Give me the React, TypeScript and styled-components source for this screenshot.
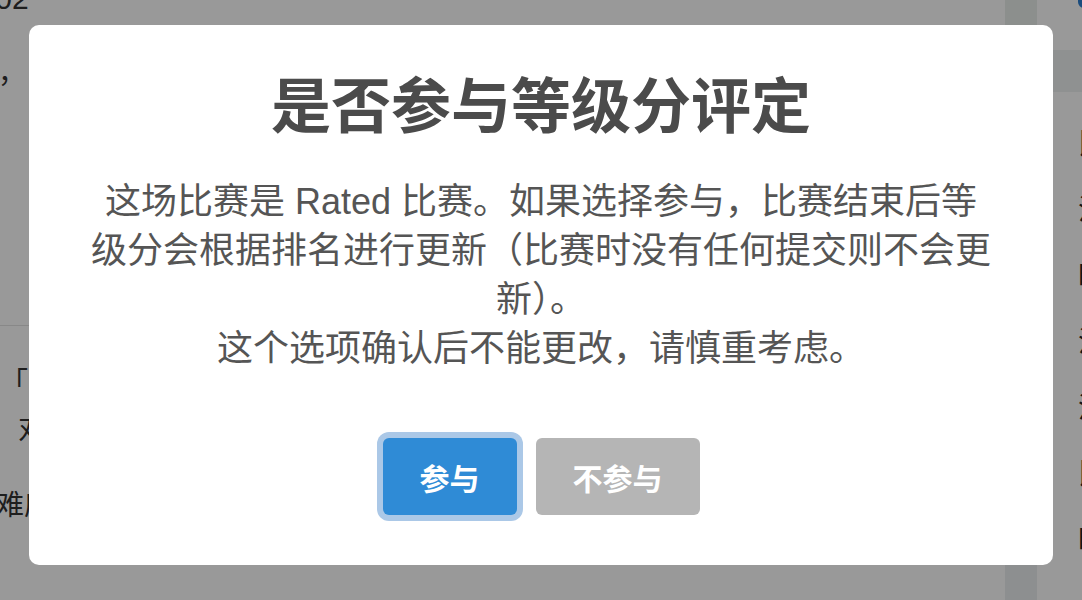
import React from "react";
import styled, { createGlobalStyle } from "styled-components";

const GlobalStyle = createGlobalStyle`
  html, body {
    margin: 0;
    padding: 0;
    width: 1082px;
    height: 600px;
    overflow: hidden;
    background: #ffffff;
  }
  body {
    font-family: "Liberation Sans", "Noto Sans CJK SC", sans-serif;
  }
`;

const Page = styled.div`
  display: flex;
  width: 1082px;
  height: 600px;
  overflow: hidden;
  background: #ffffff;
  color: #333333;
`;

const Main = styled.div`
  flex: 1;
  display: flex;
  flex-direction: column;
  overflow: hidden;
`;

const Fragment = styled.div<{ $top: number; $left: number; $size?: number }>`
  margin-top: ${(p) => p.$top}px;
  margin-left: ${(p) => p.$left}px;
  font-size: ${(p) => p.$size ?? 28}px;
  line-height: 40px;
  white-space: nowrap;
  color: #333333;
`;

const Divider = styled.div<{ $top: number }>`
  margin-top: ${(p) => p.$top}px;
  height: 1px;
  background: #e3e3e3;
`;

const Sidebar = styled.div`
  width: 32px;
  display: flex;
  flex-direction: column;
  background: #eceef1;
`;

const SidebarThumb = styled.div`
  height: 25px;
  background: #e9eeeb;
`;

const RightPanel = styled.div`
  width: 45px;
  display: flex;
  flex-direction: column;
  overflow: hidden;
  background: #ffffff;
`;

const TopBar = styled.div`
  height: 50px;
  display: flex;
  justify-content: flex-end;
`;

const BlueDot = styled.div`
  width: 6px;
  height: 8px;
  margin-right: -2px;
  border-radius: 0 0 0 6px;
  background: #2d7fd1;
`;

const Banner = styled.div`
  height: 42px;
  background: #eef2f2;
`;

const SideText = styled.div`
  display: flex;
  flex-direction: column;
  padding-left: 41px;
  padding-top: 20px;
  font-size: 28px;
  line-height: 66px;
  white-space: nowrap;
  color: #222222;
`;

const Overlay = styled.div`
  position: fixed;
  inset: 0;
  background: rgba(0, 0, 0, 0.4);
  display: flex;
  justify-content: center;
  align-items: flex-start;
  padding-top: 25px;
`;

const Modal = styled.div`
  width: 1024px;
  box-sizing: border-box;
  background: #ffffff;
  border-radius: 10px;
  padding: 47px 0 50px;
  display: flex;
  flex-direction: column;
  align-items: center;
  text-align: center;
`;

const Title = styled.h2`
  margin: 0;
  font-size: 60px;
  line-height: 72px;
  font-weight: 700;
  color: #4b4b4b;
`;

const Text = styled.div`
  margin-top: 33px;
  width: 904px;
  font-size: 36px;
  line-height: 49px;
  color: #555555;
`;

const Actions = styled.div`
  margin-top: 65px;
  display: flex;
  gap: 19px;
`;

const Button = styled.button<{ $variant: "confirm" | "cancel" }>`
  height: 77px;
  padding: 0 37px;
  border: none;
  border-radius: 6px;
  font-family: "Liberation Sans", "Noto Sans CJK SC", sans-serif;
  font-size: 30px;
  font-weight: 700;
  color: #ffffff;
  cursor: pointer;
  background: ${(p) => (p.$variant === "confirm" ? "#2f8bd6" : "#b5b5b5")};
  box-shadow: ${(p) =>
    p.$variant === "confirm" ? "0 0 0 6px #abc8e7" : "none"};
`;

export default function App() {
  return (
    <>
      <GlobalStyle />
      <Page>
        <Main>
          <Fragment $top={-21} $left={-38} $size={30}>2002</Fragment>
          <Fragment $top={35} $left={-2}>，</Fragment>
          <Divider $top={231} />
          <Fragment $top={38} $left={0}>「问题</Fragment>
          <Fragment $top={6} $left={18}>对</Fragment>
          <Fragment $top={36} $left={-4}>难度</Fragment>
        </Main>
        <Sidebar>
          <SidebarThumb />
        </Sidebar>
        <RightPanel>
          <TopBar>
            <BlueDot />
          </TopBar>
          <Banner />
          <SideText>
            <span>比</span>
            <span>注</span>
            <span>时</span>
            <span>注</span>
            <span>流</span>
            <span>比</span>
            <span>时</span>
          </SideText>
        </RightPanel>
      </Page>
      <Overlay>
        <Modal role="dialog">
          <Title>是否参与等级分评定</Title>
          <Text>
            这场比赛是 Rated 比赛。如果选择参与，比赛结束后等级分会根据排名进行更新（比赛时没有任何提交则不会更新）。
            <br />
            这个选项确认后不能更改，请慎重考虑。
          </Text>
          <Actions>
            <Button $variant="confirm">参与</Button>
            <Button $variant="cancel">不参与</Button>
          </Actions>
        </Modal>
      </Overlay>
    </>
  );
}
